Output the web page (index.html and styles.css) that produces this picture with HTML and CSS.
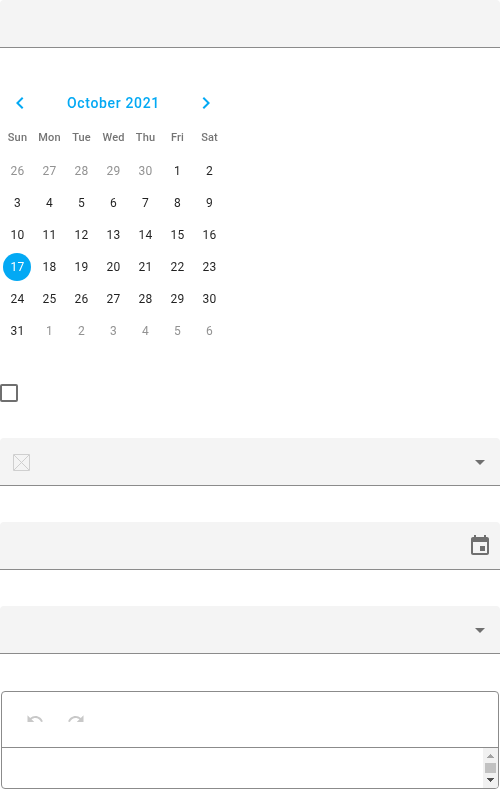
FILE: index.html
```
<!DOCTYPE html>
<html lang="en">
<head>
<meta charset="utf-8">
<title>Editors</title>
<link rel="stylesheet" href="styles.css">
</head>
<body>
<main class="form">
  <div class="field"></div>

  <section class="calendar">
    <header class="cal-nav">
      <svg class="chevron" viewBox="0 0 24 24"><path d="M15.41 7.41 14 6l-6 6 6 6 1.41-1.41L10.83 12z"/></svg>
      <span class="caption">October 2021</span>
      <svg class="chevron" viewBox="0 0 24 24"><path d="M10 6 8.59 7.41 13.17 12l-4.58 4.59L10 18l6-6z"/></svg>
    </header>
    <div class="week weekdays"><span>Sun</span><span>Mon</span><span>Tue</span><span>Wed</span><span>Thu</span><span>Fri</span><span>Sat</span></div>
    <div class="week"><span class="other">26</span><span class="other">27</span><span class="other">28</span><span class="other">29</span><span class="other">30</span><span>1</span><span>2</span></div>
    <div class="week"><span>3</span><span>4</span><span>5</span><span>6</span><span>7</span><span>8</span><span>9</span></div>
    <div class="week"><span>10</span><span>11</span><span>12</span><span>13</span><span>14</span><span>15</span><span>16</span></div>
    <div class="week"><span class="selected">17</span><span>18</span><span>19</span><span>20</span><span>21</span><span>22</span><span>23</span></div>
    <div class="week"><span>24</span><span>25</span><span>26</span><span>27</span><span>28</span><span>29</span><span>30</span></div>
    <div class="week"><span>31</span><span class="other">1</span><span class="other">2</span><span class="other">3</span><span class="other">4</span><span class="other">5</span><span class="other">6</span></div>
  </section>

  <div class="checkbox"></div>

  <div class="field">
    <svg class="no-color" viewBox="0 0 17 17"><path d="M.5.5h16v16H.5z"/><path class="cross" d="M1 1l15 15M16 1L1 16"/></svg>
    <svg class="icon end" viewBox="0 0 24 24"><path d="M7 10l5 5 5-5z"/></svg>
  </div>

  <div class="field">
    <svg class="icon end" viewBox="0 0 24 24"><path d="M17 12h-5v5h5v-5zM16 1v2H8V1H6v2H5c-1.11 0-1.99.9-1.99 2L3 19c0 1.1.89 2 2 2h14c1.1 0 2-.9 2-2V5c0-1.1-.9-2-2-2h-1V1h-2zm3 18H5V8h14v11z"/></svg>
  </div>

  <div class="field">
    <svg class="icon end" viewBox="0 0 24 24"><path d="M7 10l5 5 5-5z"/></svg>
  </div>

  <section class="editor">
    <div class="toolbar">
      <svg class="tool" viewBox="0 0 24 24"><path d="M12.5 8c-2.65 0-5.05.99-6.9 2.6L2 7v9h9l-3.62-3.62c1.39-1.16 3.16-1.88 5.12-1.88 3.54 0 6.55 2.31 7.6 5.5l2.37-.78C21.08 11.03 17.15 8 12.5 8z"/></svg>
      <svg class="tool" viewBox="0 0 24 24"><path d="M18.4 10.6C16.55 8.99 14.15 8 11.5 8c-4.65 0-8.58 3.03-9.96 7.22L3.9 16c1.05-3.19 4.05-5.5 7.6-5.5 1.95 0 3.73.72 5.12 1.88L13 16h9V7l-3.6 3.6z"/></svg>
    </div>
    <div class="content">
      <div class="scrollbar">
        <svg class="arrow dim" viewBox="0 0 7 4"><path d="M3 0h1v1h1v1h1v1h1v1H0V3h1V2h1V1h1z"/></svg>
        <div class="thumb"></div>
        <svg class="arrow" viewBox="0 0 7 4"><path d="M0 0h7v1H6v1H5v1H4v1H3V3H2V2H1V1H0z"/></svg>
      </div>
    </div>
  </section>
</main>
</body>
</html>
```
FILE: styles.css
```
* { box-sizing: border-box; }
body { margin: 0; background: #fff; font-family: Roboto, sans-serif; }
svg { display: block; flex: none; }

.form { display: flex; flex-direction: column; height: 800px; overflow: hidden; }

.field {
  display: flex;
  align-items: center;
  height: 48px;
  margin-bottom: 36px;
  padding: 0 8px 0 13px;
  background: #f4f4f4;
  border-bottom: 1px solid #8b8b8b;
  border-radius: 4px 4px 0 0;
}
.icon { width: 24px; height: 24px; fill: #6f6f6f; }
.end { margin-left: auto; }
.no-color { width: 17px; height: 17px; margin-top: 1px; fill: none; stroke: #cfcfcf; }
.cross { stroke-width: 1; }

.calendar { width: 226px; height: 264px; margin-bottom: 36px; will-change: transform; }
.cal-nav {
  display: flex;
  align-items: center;
  justify-content: space-between;
  height: 38px;
  padding: 0 8px;
}
.chevron { width: 24px; height: 24px; fill: #03a9f4; }
.caption { padding-left: 1px; color: #03a9f4; font-size: 14px; font-weight: 500; letter-spacing: .65px; }
.week {
  display: grid;
  grid-template-columns: repeat(7, 32px);
  width: 224px;
  height: 32px;
  margin-left: 1px;
  align-items: center;
  justify-items: center;
  font-size: 12px;
  letter-spacing: .2px;
  color: rgba(0, 0, 0, .87);
}
.week span { width: 28px; padding-left: 1px; line-height: 28px; text-align: center; border-radius: 50%; }
.weekdays { height: 33px; padding-bottom: 1px; color: #757575; font-size: 11px; font-weight: 500; letter-spacing: .15px; }
.week .other { color: #929292; }
.week .selected { background: #03a9f4; color: #fff; }

.checkbox { flex: none; width: 18px; height: 18px; margin-bottom: 36px; border: 2px solid #6f6f6f; border-radius: 2px; }

.editor { margin: 1px 1px 0; height: 98px; border: 1px solid #8b8b8b; border-radius: 4px; overflow: hidden; }
.toolbar { display: flex; align-items: center; gap: 23px; height: 56px; padding: 0 0 1px 24px; border-bottom: 1px solid #8b8b8b; }
.tool { width: 18px; height: 18px; fill: #c8c8c8; }
.content { display: flex; justify-content: flex-end; height: 40px; }
.scrollbar { display: flex; flex-direction: column; align-items: center; width: 15px; padding-top: 6px; background: #f1f1f1; }
.arrow { width: 7px; height: 4px; fill: #505050; }
.dim { fill: #a3a3a3; }
.thumb { width: 11px; height: 10px; margin: 5px 0; background: #c1c1c1; }
```
